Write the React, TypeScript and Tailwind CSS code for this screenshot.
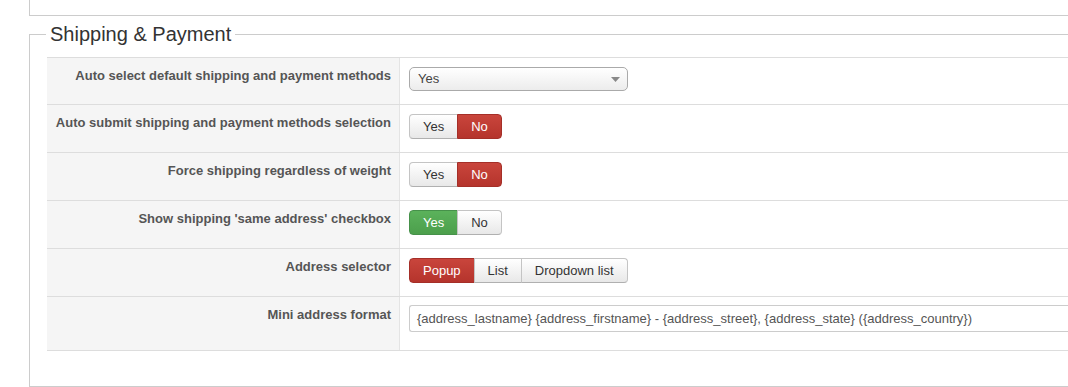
import React from "react";

const font = { fontFamily: '"Liberation Sans", Arial, Helvetica, sans-serif' };

function Label({ children }: { children: React.ReactNode }) {
  return (
    <div className="w-[353px] shrink-0 bg-[#f5f5f5] border-r border-[#e4e4e4] text-right pr-[8px] pt-[8px] text-[13px] leading-[20px] font-bold text-[#555]">
      {children}
    </div>
  );
}

type Opt = { label: string; active?: "red" | "green" };

function BtnGroup({ options }: { options: Opt[] }) {
  return (
    <div className="flex">
      {options.map((o, i) => {
        const first = i === 0;
        const last = i === options.length - 1;
        const base =
          "h-[25px] px-[13px] flex items-center text-[13px] leading-[17px] border " +
          (first ? "rounded-l-[4px] " : "") +
          (last ? "rounded-r-[4px] " : "") +
          (!first ? "-ml-px " : "");
        const style =
          o.active === "red"
            ? "bg-gradient-to-b from-[#c9453c] to-[#b5342c] border-[#a52f28] text-white"
            : o.active === "green"
            ? "bg-gradient-to-b from-[#5bb25b] to-[#4c9f4c] border-[#46914a] text-white"
            : "bg-gradient-to-b from-white to-[#e8e8e8] border-[#c4c4c4] border-b-[#b0b0b0] text-[#333]";
        return (
          <div key={o.label} className={base + style}>
            {o.label}
          </div>
        );
      })}
    </div>
  );
}

export default function App() {
  return (
    <div className="w-[1068px] h-[387px] bg-white overflow-hidden" style={font}>
      <div className="ml-[29px] w-[1060px] h-[16px] border-l border-b border-[#cccccc]" />
      <fieldset className="ml-[29px] mt-[6px] w-[1060px] border border-r-0 border-[#cccccc] pl-[17px] pb-[35px]">
        <legend className="-ml-px px-[4px] text-[20px] leading-[24px] text-[#333]">
          Shipping &amp; Payment
        </legend>
        <div className="mt-[11px]">
          <div className="flex h-[47px] border-t border-[#dddddd]">
            <Label>Auto select default shipping and payment methods</Label>
            <div className="flex-1 pl-[9px] pt-[9px]">
              <div className="w-[219px] h-[24px] rounded-[5px] border border-[#aaaaaa] bg-gradient-to-b from-white to-[#ececec] flex items-center justify-between pl-[8px] pr-[7px] text-[13px] text-[#444]">
                <span>Yes</span>
                <svg width="9" height="5" viewBox="0 0 9 5">
                  <path d="M0 0 L9 0 L4.5 5 Z" fill="#888" />
                </svg>
              </div>
            </div>
          </div>
          <div className="flex h-[48px] border-t border-[#dddddd]">
            <Label>Auto submit shipping and payment methods selection</Label>
            <div className="flex-1 pl-[9px] pt-[9px]">
              <BtnGroup options={[{ label: "Yes" }, { label: "No", active: "red" }]} />
            </div>
          </div>
          <div className="flex h-[48px] border-t border-[#dddddd]">
            <Label>Force shipping regardless of weight</Label>
            <div className="flex-1 pl-[9px] pt-[9px]">
              <BtnGroup options={[{ label: "Yes" }, { label: "No", active: "red" }]} />
            </div>
          </div>
          <div className="flex h-[48px] border-t border-[#dddddd]">
            <Label>Show shipping 'same address' checkbox</Label>
            <div className="flex-1 pl-[9px] pt-[9px]">
              <BtnGroup options={[{ label: "Yes", active: "green" }, { label: "No" }]} />
            </div>
          </div>
          <div className="flex h-[48px] border-t border-[#dddddd]">
            <Label>Address selector</Label>
            <div className="flex-1 pl-[9px] pt-[9px]">
              <BtnGroup
                options={[
                  { label: "Popup", active: "red" },
                  { label: "List" },
                  { label: "Dropdown list" },
                ]}
              />
            </div>
          </div>
          <div className="flex h-[55px] border-t border-b border-[#dddddd]">
            <Label>Mini address format</Label>
            <div className="flex-1 pl-[9px] pt-[8px]">
              <div className="h-[27px] rounded-l-[3px] border border-r-0 border-[#cccccc] flex items-center pl-[7px] text-[13px] text-[#555] whitespace-nowrap">
                {"{address_lastname} {address_firstname} - {address_street}, {address_state} ({address_country})"}
              </div>
            </div>
          </div>
        </div>
      </fieldset>
    </div>
  );
}
